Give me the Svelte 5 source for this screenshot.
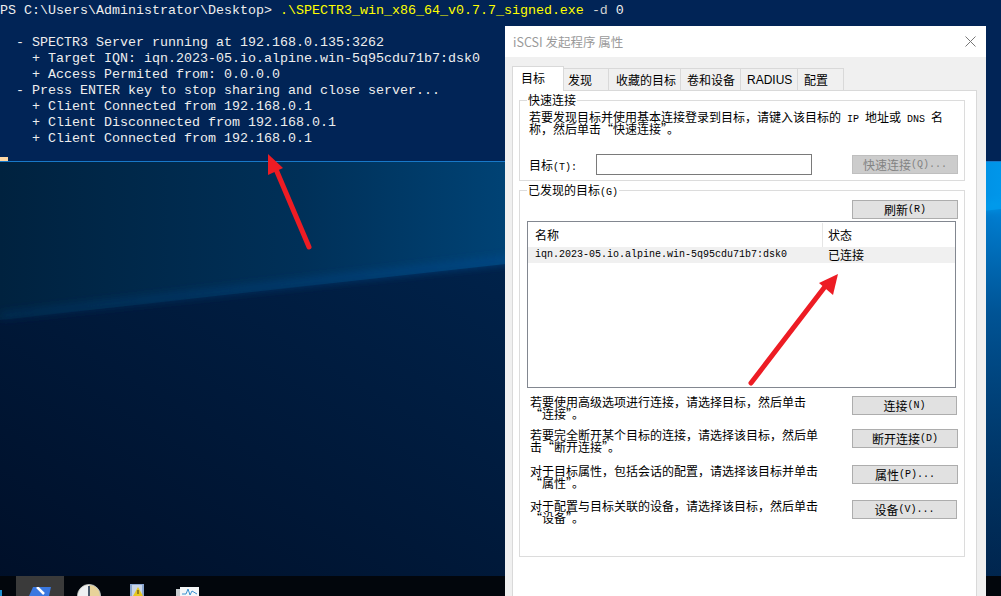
<script lang="ts">
	const lines = [
		'',
		'  - SPECTR3 Server running at 192.168.0.135:3262',
		'    + Target IQN: iqn.2023-05.io.alpine.win-5q95cdu71b7:dsk0',
		'    + Access Permited from: 0.0.0.0',
		'  - Press ENTER key to stop sharing and close server...',
		'    + Client Connected from 192.168.0.1',
		'    + Client Disconnected from 192.168.0.1',
		'    + Client Connected from 192.168.0.1'
	];
	const tabs = ['目标', '发现', '收藏的目标', '卷和设备', 'RADIUS', '配置'];
	const actions = [
		{ text: ['若要使用高级选项进行连接，请选择目标，然后单击', '“连接”。'], label: '连接', key: '(N)' },
		{ text: ['若要完全断开某个目标的连接，请选择该目标，然后单', '击“断开连接”。'], label: '断开连接', key: '(D)' },
		{ text: ['对于目标属性，包括会话的配置，请选择该目标并单击', '“属性”。'], label: '属性', key: '(P)...' },
		{ text: ['对于配置与目标关联的设备，请选择该目标，然后单击', '“设备”。'], label: '设备', key: '(V)...' }
	];
</script>

<div class="desktop">
	<svg class="wallpaper" width="1001" height="596" viewBox="0 0 1001 596">
		<defs>
			<linearGradient id="upper" x1="0" y1="0" x2="1" y2="0">
				<stop offset="0" stop-color="#00223f" />
				<stop offset="0.3" stop-color="#003058" />
				<stop offset="0.5" stop-color="#004274" />
				<stop offset="0.8" stop-color="#0068b0" />
				<stop offset="1" stop-color="#0096ea" />
			</linearGradient>
			<linearGradient id="lower" x1="0" y1="1" x2="1" y2="0">
				<stop offset="0" stop-color="#000f28" />
				<stop offset="0.5" stop-color="#002148" />
				<stop offset="1" stop-color="#003464" />
			</linearGradient>
			<radialGradient id="glow" gradientUnits="userSpaceOnUse" cx="1001" cy="209" r="420">
				<stop offset="0" stop-color="#0080d4" />
				<stop offset="0.25" stop-color="#00589c" stop-opacity="0.9" />
				<stop offset="1" stop-color="#003464" stop-opacity="0" />
			</radialGradient>
			<linearGradient id="edge" x1="0" y1="0" x2="1" y2="0">
				<stop offset="0" stop-color="#00386c" stop-opacity="0.5" />
				<stop offset="0.5" stop-color="#00488a" />
				<stop offset="1" stop-color="#00a0f0" />
			</linearGradient>
			<filter id="soft"><feGaussianBlur stdDeviation="4" /></filter>
		</defs>
		<rect width="1001" height="596" fill="url(#lower)" />
		<rect width="1001" height="596" fill="url(#glow)" />
		<path d="M0 160H1001V209L0 320Z" fill="url(#upper)" />
		<path d="M0 316L1001 205" stroke="url(#edge)" stroke-width="6" filter="url(#soft)" />
	</svg>

	<section class="terminal">
		<div class="row">PS C:\Users\Administrator\Desktop&gt; <span class="cmd">.\SPECTR3_win_x86_64_v0.7.7_signed.exe</span> <span class="flag">-d</span> 0</div>
		{#each lines as line}
			<div class="row">{line}</div>
		{/each}
		<div class="cursor"></div>
	</section>

	<div class="taskbar">
		<div class="sliver"></div>
		<div class="task active">
			<svg class="icon-ps" width="22" height="9" viewBox="0 0 22 9"><path d="M4 0H22L20 9H0Z" fill="#3a78e0" /><path d="M8 0L15 7" stroke="#fff" stroke-width="2.5" /></svg>
		</div>
		<div class="task">
			<svg class="icon-clock" width="24" height="12" viewBox="0 0 24 12"><circle cx="12" cy="12" r="11.5" fill="#e8d39a" stroke="#b8c0c8" /><path d="M1 12A11 11 0 0 1 12 1V12Z" fill="#eef0f2" /><path d="M12 2V12" stroke="#48586a" stroke-width="2" /></svg>
		</div>
		<div class="task">
			<svg class="icon-log" width="16" height="12" viewBox="0 0 16 12"><rect x="1" width="14" height="12" fill="#8aa6d0" /><rect x="3" y="1" width="10" height="11" fill="#c8d4e6" /><path d="M9 3L14 12H4Z" fill="#e8c820" /><path d="M9 6V10" stroke="#40381c" /></svg>
		</div>
		<div class="task">
			<svg class="icon-perf" width="23" height="9" viewBox="0 0 23 9"><rect y="2" width="20" height="7" fill="#c8ccd0" /><rect x="4" width="19" height="9" fill="#f4f6f8" /><path d="M6 7H10L12 2L14 8L16 4L21 7" stroke="#3a90d0" fill="none" /></svg>
		</div>
	</div>

	<section class="dialog" lang="zh-CN">
		<header class="title">
			<span>iSCSI 发起程序 属性</span>
			<svg width="11" height="11" viewBox="0 0 11 11"><path d="M.5.5L10.5 10.5M10.5.5L.5 10.5" stroke="#777" fill="none" /></svg>
		</header>
		<div class="body">
			<nav class="tabs">
				{#each tabs as tab, i}
					<div class="tab" class:selected={i === 0}>{tab}</div>
				{/each}
			</nav>
			<div class="sheet">
				<fieldset class="quick">
					<legend>快速连接</legend>
					<p class="intro">若要发现目标并使用基本连接登录到目标，请键入该目标的<span class="lat">{' IP '}</span>地址或<span class="lat">{' DNS '}</span>名<br />称，然后单击“快速连接”。</p>
					<div class="target-row">
						<span class="target-label">目标<span class="lat">(T):</span></span>
						<div class="input"></div>
						<div class="btn disabled">快速连接<span class="lat">(Q)...</span></div>
					</div>
				</fieldset>

				<fieldset class="found">
					<legend>已发现的目标<span class="lat">(G)</span></legend>
					<div class="refresh"><div class="btn">刷新<span class="lat">(R)</span></div></div>
					<div class="list">
						<div class="list-head">
							<span class="col-name">名称</span>
							<span class="col-state">状态</span>
						</div>
						<div class="list-row">
							<span class="col-name lat">iqn.2023-05.io.alpine.win-5q95cdu71b7:dsk0</span>
							<span class="col-state">已连接</span>
						</div>
					</div>
					{#each actions as action}
						<div class="action">
							<p>{action.text[0]}<br />{action.text[1]}</p>
							<div class="btn">{action.label}<span class="lat">{action.key}</span></div>
						</div>
					{/each}
				</fieldset>
			</div>
		</div>
	</section>

	<svg class="arrows" width="1001" height="596" viewBox="0 0 1001 596">
		<path d="M309 247L275 167" stroke="#ed1c24" stroke-width="5" stroke-linecap="round" />
		<path d="M268 154L283 168L268 175Z" fill="#ed1c24" />
		<path d="M751 383L827 284" stroke="#ed1c24" stroke-width="5" stroke-linecap="round" />
		<path d="M838 274L833 295L819 283Z" fill="#ed1c24" />
	</svg>
</div>

<style>
	:global(body) {
		margin: 0;
		overflow: hidden;
	}

	.desktop {
		position: relative;
		display: flex;
		flex-direction: column;
		width: 1001px;
		height: 596px;
		overflow: hidden;
		background: #001a38;
	}

	.wallpaper {
		position: absolute;
		inset: 0;
	}

	.terminal {
		position: relative;
		box-sizing: border-box;
		height: 162px;
		padding-top: 3px;
		background: #012456;
		border-bottom: 1px solid #1878c8;
		color: #eeeeee;
		font: 13.33px/16px 'Liberation Mono', 'Noto Sans CJK SC', monospace;
	}

	.row {
		height: 16px;
		white-space: pre;
	}

	.cmd {
		color: #ffff00;
	}

	.flag {
		color: #d0d0d0;
	}

	.cursor {
		position: absolute;
		left: 0;
		bottom: 0;
		width: 8px;
		height: 4px;
		background: #fdd7a4;
	}

	.taskbar {
		position: absolute;
		left: 0;
		right: 0;
		bottom: 0;
		display: flex;
		height: 20px;
		background: #02060c;
		overflow: hidden;
	}

	.sliver {
		width: 2px;
		height: 6px;
		margin: 14px 14px 0 0;
		background: #1c8fd0;
	}

	.task {
		display: flex;
		justify-content: center;
		align-items: flex-end;
		width: 48px;
		height: 20px;
	}

	.task.active {
		background: #3a3a3a;
	}

	.icon-clock {
		margin-left: 2px;
	}

	.icon-log {
		margin-left: 2px;
	}

	.icon-perf {
		margin-left: 7px;
	}

	.dialog {
		position: absolute;
		left: 505px;
		top: 26px;
		display: flex;
		flex-direction: column;
		width: 481px;
		height: 570px;
		background: #f0f0f0;
		font: 12px/12px 'Noto Sans CJK SC', 'Liberation Sans', sans-serif;
		color: #000;
	}

	.lat {
		font: 10px/0 'Liberation Mono', monospace;
		white-space: pre;
	}

	.title {
		flex: none;
		display: flex;
		align-items: center;
		justify-content: space-between;
		box-sizing: border-box;
		height: 31px;
		padding: 0 10px 0 8px;
		background: #fff;
		color: #9a9a9a;
		font-size: 12.5px;
	}

	.body {
		flex: 1;
		display: flex;
		flex-direction: column;
		min-height: 0;
		padding: 9px 9px 0 7px;
	}

	.tabs {
		flex: none;
		display: flex;
		align-items: flex-end;
		height: 24px;
	}

	.tab {
		box-sizing: border-box;
		height: 22px;
		padding: 5px 0 0 6px;
		border: 1px solid #d9d9d9;
		border-left: 0;
		border-bottom: 0;
		white-space: nowrap;
	}

	.tab:nth-child(2) {
		width: 45px;
		padding-left: 4px;
	}

	.tab:nth-child(3) {
		width: 72px;
		padding-left: 7px;
	}

	.tab:nth-child(4) {
		width: 60px;
	}

	.tab:nth-child(5) {
		width: 57px;
		font-family: 'Liberation Sans', sans-serif;
	}

	.tab:nth-child(6) {
		width: 46px;
	}

	.tab.selected {
		position: relative;
		z-index: 1;
		width: 52px;
		height: 25px;
		margin-bottom: -1px;
		padding: 5px 0 0 8px;
		background: #fff;
		border-left: 1px solid #d9d9d9;
	}

	.sheet {
		flex: 1;
		display: flex;
		flex-direction: column;
		gap: 3px;
		box-sizing: border-box;
		padding: 3px 11px 0 6px;
		background: #fff;
		border: 1px solid #d9d9d9;
		border-bottom: 0;
	}

	fieldset {
		flex: none;
		box-sizing: border-box;
		margin: 0;
		border: 1px solid #dcdcdc;
		min-width: 0;
	}

	legend {
		padding: 0 1px;
		line-height: 12px;
	}

	.quick {
		height: 87px;
		padding: 5px 7px 0 9px;
	}

	.quick legend {
		margin-left: -2px;
	}

	p {
		margin: 0;
		white-space: nowrap;
		font-feature-settings: 'fwid' 1;
	}

	.target-row {
		display: flex;
		align-items: center;
		margin-top: 19px;
	}

	.target-label {
		flex: none;
		width: 67px;
	}

	.input {
		flex: none;
		box-sizing: border-box;
		width: 216px;
		height: 21px;
		background: #fff;
		border: 1px solid #7a7a7a;
	}

	.btn {
		flex: none;
		display: flex;
		align-items: center;
		justify-content: center;
		box-sizing: border-box;
		width: 106px;
		height: 19px;
		background: #e1e1e1;
		border: 1px solid #adadad;
		white-space: pre;
	}

	.btn .lat {
		line-height: 12px;
	}

	.btn.disabled {
		margin-left: 40px;
		background: #cccccc;
		border-color: #bfbfbf;
		color: #838383;
	}

	.found {
		height: 373px;
		padding: 0 8px 0 7px;
	}

	.refresh {
		display: flex;
		justify-content: flex-end;
		margin-right: -2px;
		padding-top: 4px;
	}

	.list {
		box-sizing: border-box;
		height: 167px;
		margin: 2px 0 8px;
		background: #fff;
		border: 1px solid #828790;
	}

	.list-head,
	.list-row {
		display: flex;
		align-items: center;
	}

	.list-head {
		height: 25px;
	}

	.list-row {
		height: 16px;
		background: #f0f0f0;
	}

	.col-name {
		box-sizing: border-box;
		width: 295px;
		padding-left: 7px;
		white-space: nowrap;
	}

	.list-head .col-name {
		line-height: 24px;
		border-right: 1px solid #e5e5e5;
	}

	.col-state {
		padding-left: 5px;
	}

	.action {
		display: flex;
		height: 35px;
		padding-left: 3px;
	}

	.action:nth-child(4) {
		height: 33px;
	}

	.action:nth-child(5) {
		height: 36px;
	}

	.action p {
		flex: none;
		width: 322px;
	}

	.action .btn {
		width: 105px;
	}

	.action:nth-child(5) .btn,
	.action:nth-child(6) .btn {
		width: 106px;
	}

	.arrows {
		position: absolute;
		inset: 0;
		pointer-events: none;
	}
</style>
